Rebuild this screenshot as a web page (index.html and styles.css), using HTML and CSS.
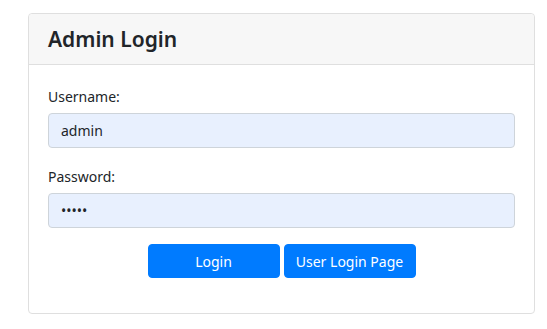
FILE: index.html
```html
<!DOCTYPE html>
<html lang="en">
<head>
    <meta charset="UTF-8">
    <meta name="viewport" content="width=device-width, initial-scale=1.0">
    <title>Admin Login</title>
    <link rel="stylesheet" href="styles.css">
</head>
<body>
    <div class="card">
        <div class="card-header">
            <h3>Admin Login</h3>
        </div>
        <div class="card-body">
            <form>
                <div class="form-group">
                    <label for="username">Username:</label>
                    <input id="username" class="form-control" type="text" value="admin">
                </div>
                <div class="form-group">
                    <label for="password">Password:</label>
                    <input id="password" class="form-control" type="password" value="admin">
                </div>
                <div class="actions">
                    <button type="button" class="btn">Login</button>
                    <button type="button" class="btn">User Login Page</button>
                </div>
            </form>
        </div>
    </div>
</body>
</html>
```

FILE: styles.css
```css
body {
    margin: 0;
    padding: 13px 13px 0 28px;
    font-family: "Noto Sans", "Open Sans", sans-serif;
    font-size: 14px;
    color: #212529;
    background-color: #fff;
}

.card {
    width: 507px;
    box-sizing: border-box;
    border: 1px solid #dfdfdf;
    border-radius: 4px;
}

.card-header {
    background-color: #f7f7f7;
    border-bottom: 1px solid #dfdfdf;
    border-radius: 4px 4px 0 0;
    padding: 0 19px;
    height: 50px;
    display: flex;
    align-items: center;
}

.card-header h3 {
    margin: 0;
    font-size: 21px;
    font-weight: 600;
}

.card-body {
    padding: 20px 19px 20px 19px;
}

.form-group {
    margin-bottom: 17px;
}

label {
    display: block;
    line-height: 24px;
    margin-bottom: 4px;
}

.form-control {
    display: block;
    width: 100%;
    height: 35px;
    box-sizing: border-box;
    padding: 0 12px;
    font-family: inherit;
    font-size: 14px;
    color: #212529;
    background-color: #e8f0fe;
    border: 1px solid #ced4da;
    border-radius: 4px;
}

.actions {
    display: flex;
    justify-content: center;
    gap: 4px;
    margin-top: -1px;
    margin-bottom: 15px;
}

.btn {
    width: 132px;
    height: 34px;
    font-family: inherit;
    font-size: 14px;
    color: #fff;
    background-color: #007bff;
    border: 1px solid #007bff;
    border-radius: 4px;
    cursor: pointer;
}
```
